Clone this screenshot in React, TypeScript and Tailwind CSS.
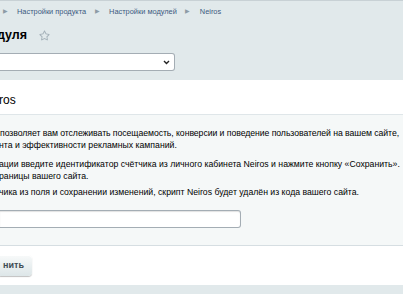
import { FaRegStar } from "react-icons/fa";

const Crumb = ({ label }: { label: string }) => (
  <div className="flex items-center">
    <span className="text-[6px] text-[#8d9ca6] w-[12px] text-center">&#9654;</span>
    <span className="pl-[6px] pr-[5px] text-[#3b5a80]">{label}</span>
  </div>
);

const App = () => {
  return (
    <div className="w-[403px] h-[294px] overflow-hidden bg-[#e1e9eb] border-t border-[#c8d1d5] font-['Liberation_Sans',Arial,sans-serif]">
      <div className="flex items-center h-[22px] text-[7.4px] -ml-[1px]">
        <Crumb label="Настройки продукта" />
        <Crumb label="Настройки модулей" />
        <Crumb label="Neiros" />
      </div>
      <div className="flex items-center h-[25px] gap-[12px] -ml-[3px]">
        <h1 className="text-[12.5px] font-bold text-[#000]">дуля</h1>
        <FaRegStar className="text-[#a3b0b8]" size={11} />
      </div>
      <div className="mt-[5px] w-[175px] h-[18px] bg-white border border-[#a4adb4] rounded-r-[3px] border-l-0 flex items-center justify-end pr-[4px]">
        <svg width="7" height="5" viewBox="0 0 7 5">
          <path d="M1 1 L3.5 3.5 L6 1" stroke="#222" strokeWidth="1.4" fill="none" />
        </svg>
      </div>
      <div className="mt-[9px] bg-white">
        <div className="h-[35px] flex items-center pt-[5px] border-b border-[#dfe6e9]">
          <span className="text-[12px] text-[#000] -ml-[1px]">ros</span>
        </div>
        <div className="bg-[#f5f8f8] pt-[12px] pb-[17px] text-[8.7px] leading-[12px] text-[#000] border-b border-[#d6dee2] whitespace-nowrap">
          <p>
            <span className="block tracking-[-0.06px]">
              позволяет вам отслеживать посещаемость, конверсии и поведение пользователей на вашем сайте,
            </span>
            <span className="block -ml-[1px]">нта и эффективности рекламных кампаний.</span>
          </p>
          <p className="mt-[7px] -ml-[1px]">
            <span className="block">
              ации введите идентификатор счётчика из личного кабинета Neiros и нажмите кнопку «Сохранить».
            </span>
            <span className="block">раницы вашего сайта.</span>
          </p>
          <p className="mt-[4px] -ml-[1px]">
            чика из поля и сохранении изменений, скрипт Neiros будет удалён из кода вашего сайта.
          </p>
          <div className="mt-[12px] w-[241px] h-[18px] bg-white border border-[#a4adb4] border-l-0 rounded-r-[3px] shadow-[inset_0_1px_1px_rgba(0,0,0,0.12)]" />
        </div>
        <div className="h-[39px] flex items-center">
          <button className="h-[21px] w-[32px] flex items-center justify-end pr-[8px] rounded-r-[4px] bg-gradient-to-b from-[#f8fafa] to-[#dde6e8] shadow-[0_1px_1px_rgba(0,0,0,0.25),inset_0_1px_0_#fff] text-[9px] font-bold text-[#3f4b54]">
            нить
          </button>
        </div>
      </div>
    </div>
  );
};

export default App;
